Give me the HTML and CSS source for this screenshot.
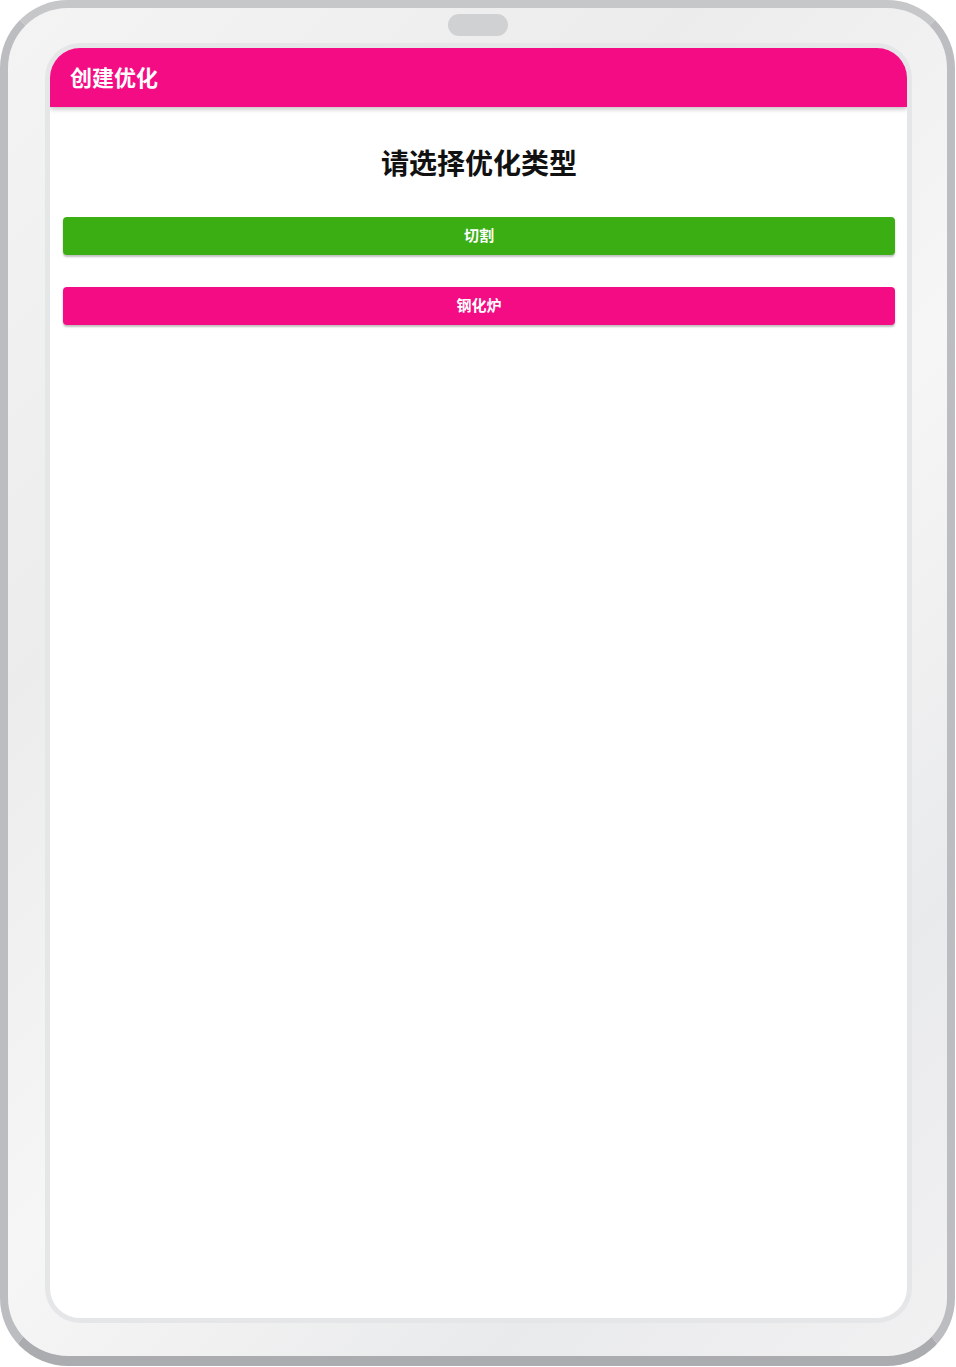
FILE: index.html
```html
<!DOCTYPE html>
<html lang="zh-CN">
<head>
    <meta charset="UTF-8">
    <meta name="viewport" content="width=device-width, initial-scale=1.0">
    <title>创建优化</title>
    <link rel="stylesheet" href="styles.css">
</head>
<body>
    <div class="device">
        <span class="camera"></span>
        <div class="screen">
            <div class="appBar">创建优化</div>
            <div class="content">
                <h2 class="pageTitle">请选择优化类型</h2>
                <button class="typeBtn greenBtn">切割</button>
                <button class="typeBtn pinkBtn">钢化炉</button>
            </div>
        </div>
    </div>
</body>
</html>
```

FILE: styles.css
```css
* {
    box-sizing: border-box;
}

body, html {
    margin: 0;
    padding: 0;
    background-color: white;
    font-family: "Noto Sans CJK SC", "Noto Sans", sans-serif;
}

/* Tablet frame */
.device {
    position: relative;
    width: 955px;
    height: 1366px;
    border: 8px solid #bcbdc0;
    border-top-color: #c6c7c9;
    border-bottom-color: #abacaf;
    border-bottom-width: 10px;
    border-radius: 68px;
    padding: 40px 40px 38px 42px;
    background: linear-gradient(135deg, #f4f4f5 0%, #ececed 30%, #f6f6f6 55%, #e9eaeb 80%, #f1f1f2 100%);
    display: flex;
}

/* Front camera pill */
.camera {
    position: absolute;
    top: 6px;
    left: 440px;
    width: 60px;
    height: 22px;
    border-radius: 11px;
    background: #d0d1d3;
}

.screen {
    flex: 1;
    display: flex;
    flex-direction: column;
    background: white;
    border-radius: 30px;
    overflow: hidden;
    box-shadow: 0 0 0 5px #e5e6e8;
}

/* Top bar */
.appBar {
    height: 59px;
    flex-shrink: 0;
    background: #f40c84;
    color: white;
    font-size: 22px;
    font-weight: bold;
    display: flex;
    align-items: center;
    padding-left: 20px;
    padding-bottom: 4px;
    box-shadow: 0 2px 5px rgba(0, 0, 0, 0.25);
    position: relative;
    z-index: 1;
}

.content {
    padding: 0 12px 0 13px;
    display: flex;
    flex-direction: column;
}

.pageTitle {
    margin: 35px 0 35px 0;
    text-align: center;
    font-size: 28px;
    line-height: 40px;
    font-weight: bold;
    color: #111;
}

.typeBtn {
    height: 38px;
    border: none;
    border-radius: 4px;
    padding: 0 0 3px 0;
    color: white;
    font-family: inherit;
    font-size: 15px;
    font-weight: bold;
    box-shadow: 0 2px 2px rgba(0, 0, 0, 0.25);
    cursor: pointer;
}

.greenBtn {
    background: #3bae14;
}

.pinkBtn {
    background: #f40c84;
    margin-top: 32px;
}
```
